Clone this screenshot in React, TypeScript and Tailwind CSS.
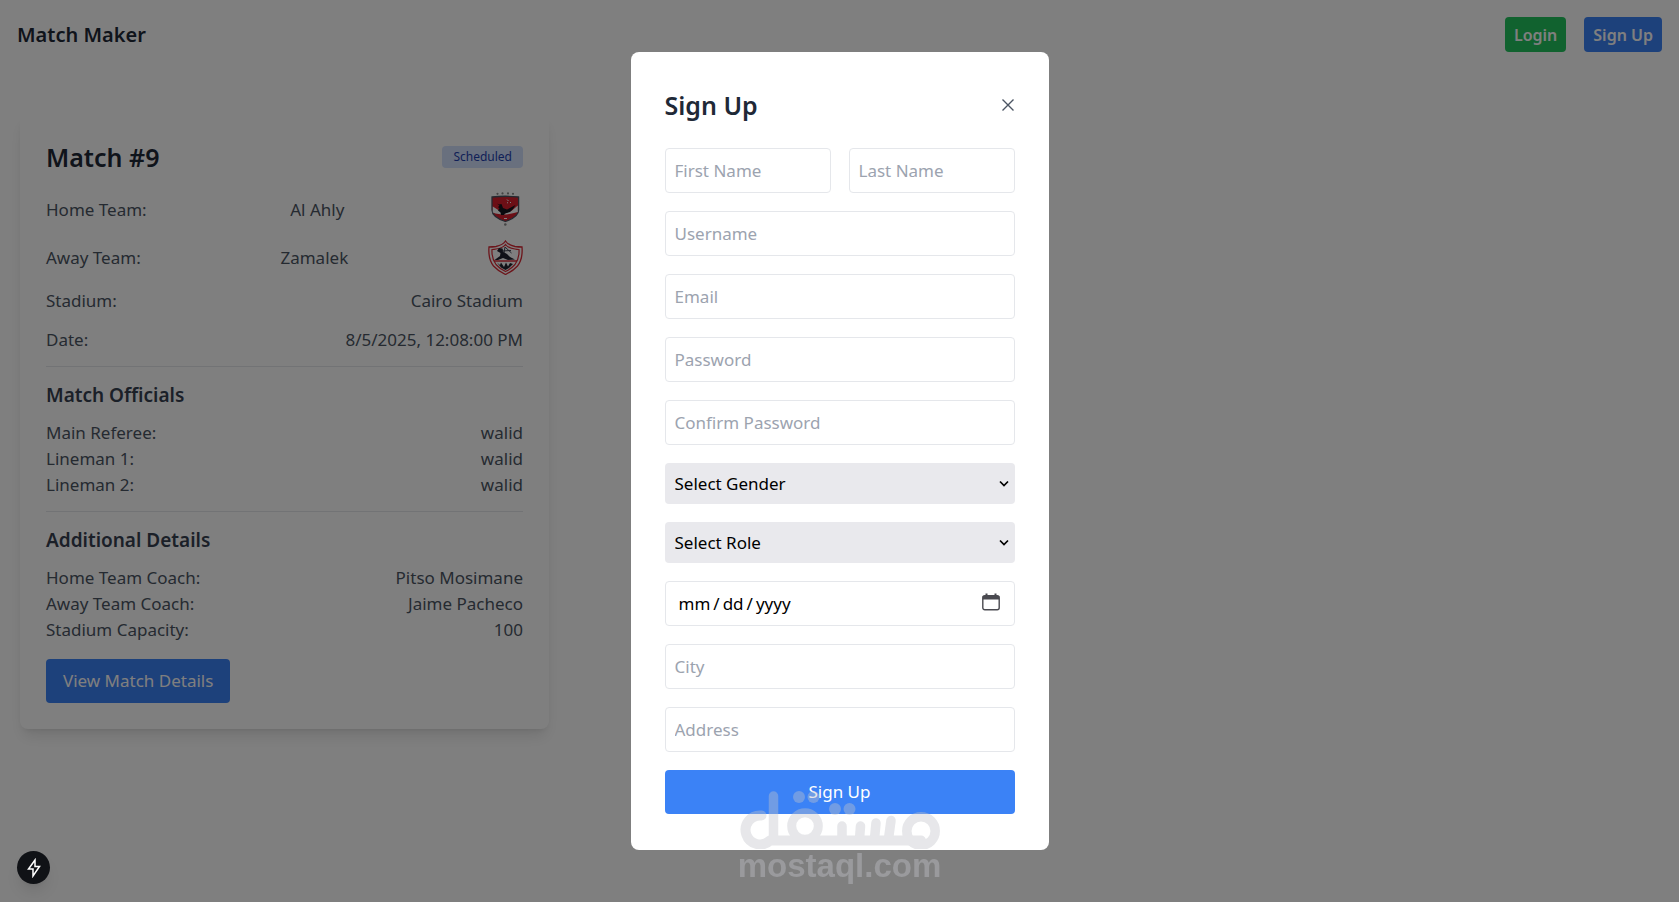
import { useState } from "react";

const officials = [
  { label: "Main Referee:", value: "walid" },
  { label: "Lineman 1:", value: "walid" },
  { label: "Lineman 2:", value: "walid" },
];

const details = [
  { label: "Home Team Coach:", value: "Pitso Mosimane" },
  { label: "Away Team Coach:", value: "Jaime Pacheco" },
  { label: "Stadium Capacity:", value: "100" },
];

const inputClass =
  "block w-full h-[45px] px-[9px] border border-[#e5e7eb] rounded bg-white text-[17px] text-black placeholder:text-[#9ca3af]";

const AhlyLogo = () => (
  <svg viewBox="0 0 35 35" className="w-[35px] h-[35px]" role="img" aria-label="Al Ahly">
    <g fill="#8a8a8a">
      <circle cx="9.5" cy="1.8" r="1.1" />
      <circle cx="14.5" cy="1.4" r="1.1" />
      <circle cx="20" cy="1.4" r="1.1" />
      <circle cx="25" cy="1.8" r="1.1" />
      <circle cx="17.3" cy="32.5" r="1.3" />
    </g>
    <path d="M4 5Q17.300 3.500 30.600 5V18Q30.600 25 17.300 29.500Q4 25 4 18Z" fill="#d81f2c" stroke="#4a5361" strokeWidth="1.300" />
    <path d="M4.800 14.500L11 18.500L17 21.500L24 18.500L29.800 13.500V20Q24 21.500 18 22.500Q10 22.500 4.800 20.500Z" fill="#fff" />
    <path d="M9 11.500L11 12.500L13.500 12L15 16L19 17.500L27.500 13L25 17L22 20L17 21.500L16 23H13L12.500 20.500L10 18.500L11.500 16.500L10 15L11.500 13.800Z" fill="#14141c" />
    <path d="M19 7.500L20.500 9M22 10L23 11M19 10.500L20 11" stroke="#fff" strokeWidth="1" />
    <path d="M16 26.500H19" stroke="#fff" strokeWidth="1" />
  </svg>
);

const ZamalekLogo = () => (
  <svg viewBox="0 0 35 35" className="w-[35px] h-[35px]" role="img" aria-label="Zamalek">
    <path d="M17.500 1Q20 5 27 6.500Q31 7 34 7Q35 19 29.500 26Q25 31 17.500 34.500Q10 31 5.500 26Q0 19 1 7Q4 7 8 6.500Q15 5 17.500 1Z" fill="#fff" stroke="#d92a36" strokeWidth="1.300" />
    <path d="M17.500 4.500Q20 8 27 9Q29 9.500 31 9.500Q31.500 18.500 27 24.500Q23 29 17.500 31.500Q12 29 8 24.500Q3.500 18.500 4 9.500Q6 9.500 8 9Q15 8 17.500 4.500Z" fill="#fff" stroke="#d92a36" strokeWidth="1.200" />
    <path d="M6 21H29" stroke="#d92a36" strokeWidth="1.500" />
    <path d="M9 11L11 8L14.500 8.500L15.500 12L19 14L22 17L27 19.500L20 20L15 18L10 20H6.500L12 16L12.500 13Z" fill="#20222e" />
    <path d="M14 11L23 10.500M17 7L23.500 13M17 7L16 13" stroke="#3f4350" strokeWidth="1" fill="none" />
    <path d="M9 22.500L12 25L13 22.500L16 27L18 22.500L20 26.500L22 23L25 24L21 28L17.500 30L13 27.500Z" fill="#20222e" />
  </svg>
);

const Row = (props: { label: string; value: string; className?: string }) => {
  const { label, value, className } = props;
  return (
    <div className={`flex items-center justify-between ${className || ""}`}>
      <span>{label}</span>
      <span>{value}</span>
    </div>
  );
};

const MatchCard = () => {
  return (
    <div className="bg-white rounded-lg shadow-lg p-[26px] text-[#4b5563]">
      <div className="flex items-center justify-between mb-[17px]">
        <h2 className="text-[25px] leading-9 font-semibold text-[#1f2937]">Match #9</h2>
        <span className="bg-[#d2e0fd] text-[#1e40af] text-xs leading-[18px] px-[11px] py-0.5 rounded">Scheduled</span>
      </div>
      <div className="flex items-center justify-between mb-[13px]">
        <span>Home Team:</span>
        <span>Al Ahly</span>
        <AhlyLogo />
      </div>
      <div className="flex items-center justify-between mb-[13px]">
        <span>Away Team:</span>
        <span>Zamalek</span>
        <ZamalekLogo />
      </div>
      <Row label="Stadium:" value="Cairo Stadium" className="mb-[13px]" />
      <Row label="Date:" value="8/5/2025, 12:08:00 PM" className="mb-[13px]" />
      <div className="border-t border-[#e5e7eb] pt-[13px] mb-[13px]">
        <h3 className="text-[19px] leading-[31px] font-semibold text-[#374151] mb-[9px]">Match Officials</h3>
        {officials.map((item) => (
          <Row key={item.label} label={item.label} value={item.value} />
        ))}
      </div>
      <div className="border-t border-[#e5e7eb] pt-[13px] mb-4">
        <h3 className="text-[19px] leading-[31px] font-semibold text-[#374151] mb-[9px]">Additional Details</h3>
        {details.map((item) => (
          <Row key={item.label} label={item.label} value={item.value} />
        ))}
      </div>
      <button className="bg-[#3b82f6] text-white rounded px-[17px] py-[9px]">View Match Details</button>
    </div>
  );
};

const SelectField = (props: { label: string; options: string[] }) => {
  const { label, options } = props;
  return (
    <div className="relative">
      <select aria-label={label} className="block appearance-none w-full h-[41px] px-[10px] rounded bg-[#e9e9ed] text-[17px] text-black">
        <option>{label}</option>
        {options.map((option) => (
          <option key={option}>{option}</option>
        ))}
      </select>
      <svg viewBox="0 0 12 8" className="absolute right-[5px] top-[17px] w-3 h-2 pointer-events-none">
        <path d="M2 1.500L6 5.500L10 1.500" fill="none" stroke="#000" strokeWidth="1.700" />
      </svg>
    </div>
  );
};

const SignUpModal = (props: {
  setOpen: React.Dispatch<React.SetStateAction<boolean>>;
}) => {
  const { setOpen } = props;
  return (
    <div className="fixed inset-0 flex items-center justify-center bg-black/50">
      <div className="bg-white rounded-lg w-[418px] px-[34px] pt-[34px] pb-9">
        <div className="flex items-center justify-between mb-6">
          <h2 className="text-[25px] leading-[38px] font-semibold text-[#1f2937]">Sign Up</h2>
          <button aria-label="Close" onClick={() => setOpen(false)}>
            <svg viewBox="0 0 14 14" className="w-3.5 h-3.5">
              <path d="M1.500 1.500L12.500 12.500M12.500 1.500L1.500 12.500" stroke="#4b5563" strokeWidth="1.400" />
            </svg>
          </button>
        </div>
        <form className="flex flex-col gap-[18px]" onSubmit={(e) => e.preventDefault()}>
          <div className="grid grid-cols-2 gap-[18px]">
            <input type="text" aria-label="First Name" placeholder="First Name" className={inputClass} />
            <input type="text" aria-label="Last Name" placeholder="Last Name" className={inputClass} />
          </div>
          <input type="text" aria-label="Username" placeholder="Username" className={inputClass} />
          <input type="email" aria-label="Email" placeholder="Email" className={inputClass} />
          <input type="password" aria-label="Password" placeholder="Password" className={inputClass} />
          <input type="password" aria-label="Confirm Password" placeholder="Confirm Password" className={inputClass} />
          <SelectField label="Select Gender" options={["Male", "Female"]} />
          <SelectField label="Select Role" options={["Fan", "Manager"]} />
          <div className="relative">
            <input
              type="date"
              aria-label="Birth Date"
              className={`${inputClass} pl-3 [&::-webkit-calendar-picker-indicator]:opacity-0 [&::-webkit-datetime-edit-text]:px-0.5`}
            />
            <svg viewBox="0 0 18 18" className="absolute right-[15px] top-3 w-[18px] h-[18px] pointer-events-none">
              <rect x="0.800" y="2.800" width="16.400" height="14" rx="2" fill="none" stroke="#4a4a50" strokeWidth="1.400" />
              <path d="M0.800 3H17.200V6.500H0.800ZM3.500 0.500H5.500V3H3.500ZM12.500 0.500H14.500V3H12.500Z" fill="#4a4a50" />
            </svg>
          </div>
          <input type="text" aria-label="City" placeholder="City" className={inputClass} />
          <input type="text" aria-label="Address" placeholder="Address" className={inputClass} />
          <button type="submit" className="bg-[#3b82f6] text-white rounded py-[9px]">Sign Up</button>
        </form>
      </div>
    </div>
  );
};

const Watermark = () => (
  <div className="fixed inset-x-0 bottom-5 flex flex-col items-center opacity-40 pointer-events-none text-[#c2c4ca]">
    <svg viewBox="0 0 202 60" className="w-[202px] h-[60px]" fill="none" stroke="currentColor" strokeLinecap="round" strokeLinejoin="round">
      <path d="M22.500 26.500A14.500 14.500 0 1 0 31 51.500H182" strokeWidth="10" />
      <path d="M34.500 7V50" strokeWidth="9.500" />
      <circle cx="66" cy="37" r="13.300" strokeWidth="9" />
      <circle cx="182" cy="42" r="14.200" strokeWidth="9.500" />
      <path d="M103 37V50M121.500 37L120.500 50M137 34L135.500 50M152 31.500L149.500 50" strokeWidth="9.500" />
      <g fill="currentColor" stroke="none">
        <circle cx="60" cy="8" r="6" />
        <circle cx="74.500" cy="8" r="6" />
        <circle cx="96" cy="20" r="6" />
        <circle cx="110.500" cy="20" r="6" />
      </g>
    </svg>
    <span className="font-['Liberation_Sans',sans-serif] font-bold text-[33px] leading-[33px]">mostaql.com</span>
  </div>
);

const App = () => {
  const [open, setOpen] = useState(true);
  return (
    <div className="min-h-screen bg-white font-['Noto_Sans',sans-serif] text-[17px] leading-[26px]">
      <header className="flex items-center justify-between p-[17px]">
        <h1 className="text-xl leading-[35px] font-semibold text-[#1f2937]">Match Maker</h1>
        <nav className="flex gap-[18px]">
          <button className="bg-[#22c55e] text-white text-base font-semibold rounded h-[35px] px-[9px]">Login</button>
          <button onClick={() => setOpen(true)} className="bg-[#3b82f6] text-white text-base font-semibold rounded h-[35px] px-[9px]">Sign Up</button>
        </nav>
      </header>
      <main className="grid grid-cols-3 gap-[26px] px-5 py-[44px]">
        <MatchCard />
      </main>
      {open && <SignUpModal setOpen={setOpen} />}
      <Watermark />
      <button aria-label="Developer tools" className="fixed left-[17px] bottom-[18px] flex items-center justify-center w-[33px] h-[33px] rounded-full bg-[#101216] shadow-lg">
        <svg viewBox="0 0 16 20" className="w-4 h-5">
          <path d="M9 2L2.500 11H7V18L13.500 8.500H9Z" fill="none" stroke="#fff" strokeWidth="1.500" />
        </svg>
      </button>
    </div>
  );
};

export default App;
